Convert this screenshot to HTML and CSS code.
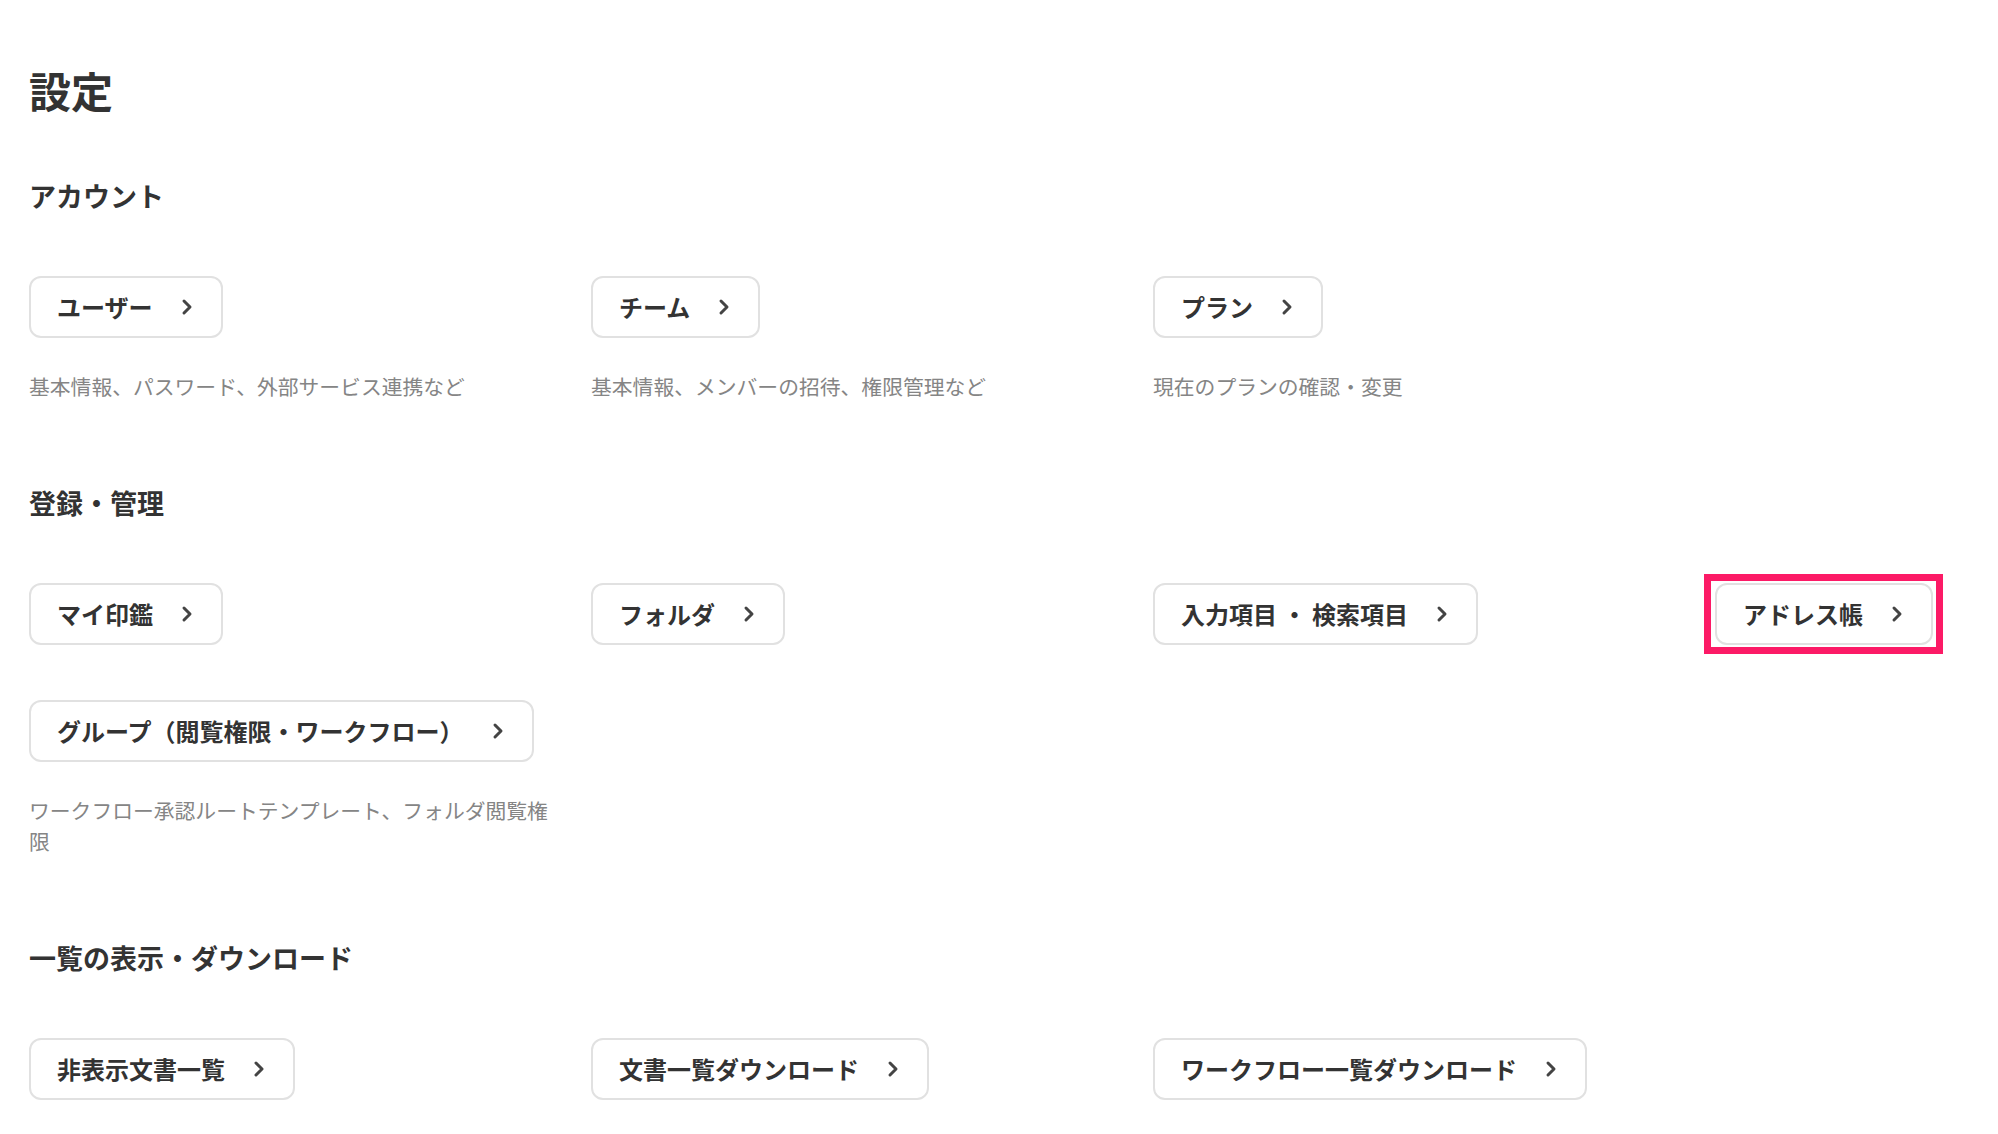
FILE: index.html
```html
<!DOCTYPE html>
<html lang="ja">
<head>
<meta charset="utf-8">
<title>設定</title>
<link rel="stylesheet" href="styles.css">
</head>
<body>
<main class="page">
  <h1 class="page-title">設定</h1>

  <section class="section">
    <h2 class="section-title">アカウント</h2>
    <div class="grid">
      <div class="item">
        <a class="nav-btn" href="#"><span>ユーザー</span><svg class="chev" viewBox="0 0 12 18" width="12" height="18"><path d="M3 3 L9 9 L3 15"/></svg></a>
        <p class="desc">基本情報、パスワード、外部サービス連携など</p>
      </div>
      <div class="item">
        <a class="nav-btn" href="#"><span>チーム</span><svg class="chev" viewBox="0 0 12 18" width="12" height="18"><path d="M3 3 L9 9 L3 15"/></svg></a>
        <p class="desc">基本情報、メンバーの招待、権限管理など</p>
      </div>
      <div class="item">
        <a class="nav-btn" href="#"><span>プラン</span><svg class="chev" viewBox="0 0 12 18" width="12" height="18"><path d="M3 3 L9 9 L3 15"/></svg></a>
        <p class="desc">現在のプランの確認・変更</p>
      </div>
    </div>
  </section>

  <section class="section">
    <h2 class="section-title">登録・管理</h2>
    <div class="grid">
      <div class="item">
        <a class="nav-btn" href="#"><span>マイ印鑑</span><svg class="chev" viewBox="0 0 12 18" width="12" height="18"><path d="M3 3 L9 9 L3 15"/></svg></a>
      </div>
      <div class="item">
        <a class="nav-btn" href="#"><span>フォルダ</span><svg class="chev" viewBox="0 0 12 18" width="12" height="18"><path d="M3 3 L9 9 L3 15"/></svg></a>
      </div>
      <div class="item">
        <a class="nav-btn" href="#"><span>入力項目 ・ 検索項目</span><svg class="chev" viewBox="0 0 12 18" width="12" height="18"><path d="M3 3 L9 9 L3 15"/></svg></a>
      </div>
      <div class="item">
        <div class="highlight">
          <a class="nav-btn" href="#"><span>アドレス帳</span><svg class="chev" viewBox="0 0 12 18" width="12" height="18"><path d="M3 3 L9 9 L3 15"/></svg></a>
        </div>
      </div>
      <div class="item">
        <a class="nav-btn" href="#"><span>グループ（閲覧権限・ワークフロー）</span><svg class="chev" viewBox="0 0 12 18" width="12" height="18"><path d="M3 3 L9 9 L3 15"/></svg></a>
        <p class="desc">ワークフロー承認ルートテンプレート、フォルダ閲覧権限</p>
      </div>
    </div>
  </section>

  <section class="section">
    <h2 class="section-title">一覧の表示・ダウンロード</h2>
    <div class="grid">
      <div class="item">
        <a class="nav-btn" href="#"><span>非表示文書一覧</span><svg class="chev" viewBox="0 0 12 18" width="12" height="18"><path d="M3 3 L9 9 L3 15"/></svg></a>
      </div>
      <div class="item">
        <a class="nav-btn" href="#"><span>文書一覧ダウンロード</span><svg class="chev" viewBox="0 0 12 18" width="12" height="18"><path d="M3 3 L9 9 L3 15"/></svg></a>
      </div>
      <div class="item">
        <a class="nav-btn" href="#"><span>ワークフロー一覧ダウンロード</span><svg class="chev" viewBox="0 0 12 18" width="12" height="18"><path d="M3 3 L9 9 L3 15"/></svg></a>
      </div>
    </div>
  </section>
</main>
</body>
</html>
```

FILE: styles.css
```css
html, body {
  margin: 0;
  padding: 0;
  background: #ffffff;
}

body {
  font-family: "Noto Sans CJK JP", "Noto Sans", sans-serif;
  color: #333333;
}

.page {
  padding: 62px 0 0 29px;
}

.page-title {
  margin: 0;
  font-size: 42px;
  line-height: 56px;
  font-weight: 700;
  color: #333333;
}

.section {
  margin-top: 60px;
}

.section + .section {
  margin-top: 83px;
}

.section-title {
  margin: 0 0 62px 0;
  font-size: 27px;
  line-height: 36px;
  font-weight: 700;
  color: #333333;
}

.grid {
  display: grid;
  grid-template-columns: repeat(3, 530px) minmax(0, 1fr);
  column-gap: 32px;
  row-gap: 55px;
  align-items: start;
}

.item {
  display: flex;
  flex-direction: column;
  align-items: flex-start;
}

.nav-btn {
  display: inline-flex;
  align-items: center;
  box-sizing: border-box;
  height: 62px;
  padding: 0 28px 0 26px;
  border: 2px solid #e1e1e1;
  border-radius: 12px;
  background: #ffffff;
  color: #333333;
  text-decoration: none;
  font-size: 24px;
  line-height: 30px;
  font-weight: 700;
  white-space: nowrap;
}

.chev {
  margin-left: 28px;
  fill: none;
  stroke: #444444;
  stroke-width: 3;
  stroke-linecap: round;
  stroke-linejoin: round;
}

.desc {
  margin: 33px 0 0 0;
  font-size: 20.8px;
  line-height: 31px;
  color: #858585;
}

.highlight {
  position: relative;
  display: inline-flex;
}

.highlight::after {
  content: "";
  position: absolute;
  top: -9px;
  bottom: -9px;
  left: -11px;
  right: -10px;
  border: 7px solid #fc1a66;
  pointer-events: none;
}
```
